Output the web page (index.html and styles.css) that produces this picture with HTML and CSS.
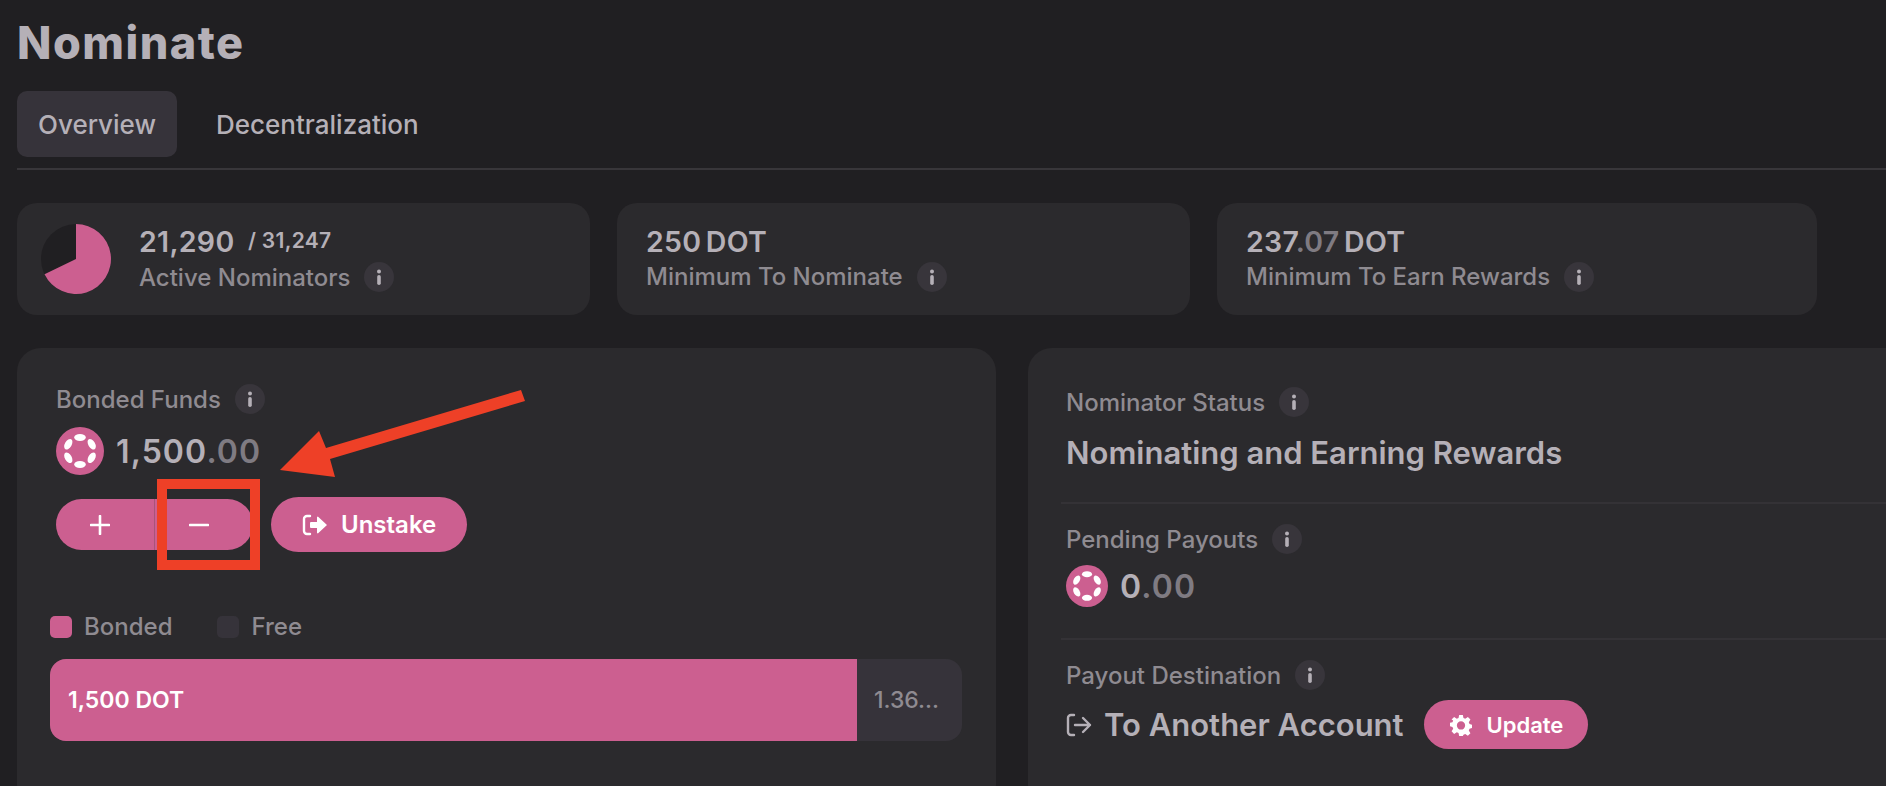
FILE: index.html
```html
<!DOCTYPE html>
<html lang="en">
<head>
<meta charset="UTF-8" />
<meta name="viewport" content="width=device-width, initial-scale=1" />
<title>Nominate</title>
<link rel="stylesheet" href="styles.css">
</head>
<body>
  <svg class="sprite" aria-hidden="true">
    <symbol id="info" viewBox="0 0 30 30">
      <circle cx="15" cy="15" r="15" fill="#38353b" />
      <ellipse cx="15" cy="9.5" rx="2" ry="2" fill="#b5b0b7" />
      <rect x="13.2" y="13" width="3.6" height="10" rx="1.8" fill="#b5b0b7" />
    </symbol>
    <symbol id="dot" viewBox="0 0 48 48">
      <circle cx="24" cy="24" r="24" fill="#cc5f90" />
      <ellipse cx="24" cy="10.5" rx="5.8" ry="3.4" fill="#fff" />
      <ellipse cx="24" cy="37.5" rx="5.8" ry="3.4" fill="#fff" />
      <ellipse cx="12.3" cy="17.2" rx="5.8" ry="3.4" fill="#fff" transform="rotate(-60 12.3 17.2)" />
      <ellipse cx="35.7" cy="17.2" rx="5.8" ry="3.4" fill="#fff" transform="rotate(60 35.7 17.2)" />
      <ellipse cx="12.3" cy="30.8" rx="5.8" ry="3.4" fill="#fff" transform="rotate(60 12.3 30.8)" />
      <ellipse cx="35.7" cy="30.8" rx="5.8" ry="3.4" fill="#fff" transform="rotate(-60 35.7 30.8)" />
    </symbol>
  </svg>

  <div class="page">
    <h1>Nominate</h1>

    <div class="tabs">
      <button class="tab active">Overview</button>
      <button class="tab">Decentralization</button>
    </div>

    <div class="stats">
      <div class="stat stat-pie">
        <svg class="pie" viewBox="0 0 70 70">
          <circle cx="35" cy="35" r="35" fill="#201f22" />
          <path d="M35 35 L35 0 A35 35 0 1 1 3.5 50.3 Z" fill="#cc5f90" />
        </svg>
        <div class="stat-text">
          <div class="stat-value">21,290 <span class="stat-total">/ 31,247</span></div>
          <div class="label">Active Nominators <svg class="info"><use href="#info" /></svg></div>
        </div>
      </div>
      <div class="stat stat-mid">
        <div class="stat-text">
          <div class="stat-value">250 DOT</div>
          <div class="label">Minimum To Nominate <svg class="info"><use href="#info" /></svg></div>
        </div>
      </div>
      <div class="stat stat-last">
        <div class="stat-text">
          <div class="stat-value">237<span class="faded">.07</span> DOT</div>
          <div class="label">Minimum To Earn Rewards <svg class="info"><use href="#info" /></svg></div>
        </div>
      </div>
    </div>

    <div class="panels">
      <section class="panel bonded">
        <div class="label">Bonded Funds <svg class="info"><use href="#info" /></svg></div>
        <div class="amount">
          <svg class="token"><use href="#dot" /></svg>
          <span>1,500<span class="faded">.00</span></span>
        </div>
        <div class="actions">
          <div class="btn-group">
            <button class="btn-half">
              <svg viewBox="0 0 20 20" width="20" height="20"><path d="M10 1v18M1 10h18" stroke="#fff" stroke-width="2.6" stroke-linecap="round" /></svg>
            </button>
            <button class="btn-half">
              <svg viewBox="0 0 20 20" width="20" height="20"><path d="M1 10h18" stroke="#fff" stroke-width="2.6" stroke-linecap="round" /></svg>
            </button>
          </div>
          <button class="btn btn-unstake">
            <svg viewBox="0 0 26 24" width="26" height="24"><path d="M8 3H5a3 3 0 0 0-3 3v12a3 3 0 0 0 3 3h3" fill="none" stroke="#fff" stroke-width="2.4" stroke-linecap="round" /><path d="M9 9h6V4.5a.8.8 0 0 1 1.4-.6L25 12l-8.600 8.100a.8.8 0 0 1-1.400-.6V15H9a1 1 0 0 1-1-1v-4a1 1 0 0 1 1-1z" fill="#fff" /></svg>
            Unstake
          </button>
        </div>
        <div class="legend">
          <span class="legend-item"><i class="swatch swatch-bonded"></i>Bonded</span>
          <span class="legend-item"><i class="swatch swatch-free"></i>Free</span>
        </div>
        <div class="bar">
          <div class="bar-fill">1,500 DOT</div>
          <div class="bar-rest">1.36...</div>
        </div>
      </section>

      <section class="panel status">
        <div class="row row-first">
          <div class="label">Nominator Status <svg class="info"><use href="#info" /></svg></div>
          <div class="status-text">Nominating and Earning Rewards</div>
        </div>
        <div class="row">
          <div class="label">Pending Payouts <svg class="info"><use href="#info" /></svg></div>
          <div class="amount amount-small">
            <svg class="token"><use href="#dot" /></svg>
            <span>0<span class="faded">.00</span></span>
          </div>
        </div>
        <div class="row">
          <div class="label">Payout Destination <svg class="info"><use href="#info" /></svg></div>
          <div class="destination">
            <svg viewBox="0 0 26 26" width="26" height="26"><path d="M8 3H5a3 3 0 0 0-3 3v14a3 3 0 0 0 3 3h3" fill="none" stroke="#b5b0b7" stroke-width="2.4" stroke-linecap="round" /><path d="M9 13h15M17 6l7 7-7 7" fill="none" stroke="#b5b0b7" stroke-width="2.4" stroke-linecap="round" stroke-linejoin="round" /></svg>
            <span class="status-text">To Another Account</span>
            <button class="btn btn-update">
              <svg viewBox="0 0 24 24" width="22" height="22"><path fill="#fff" fill-rule="evenodd" d="M10 1h4l.7 3.300 1.900.8L19.500 3.300 22.300 6.100 20.500 9l.8 1.900 2.700.7v3.800l-2.700.7-.8 1.900 1.800 2.900-2.800 2.800-2.900-1.800-1.900.8L14 24h-4l-.7-3.300-1.900-.8-2.900 1.800-2.800-2.800L3.500 16l-.8-1.900L0 13.400V9.600l2.700-.7.8-1.900L1.700 6.100 4.500 3.300 7.400 5.100l1.900-.8zM12 8a4.500 4.500 0 1 0 0 9 4.500 4.500 0 0 0 0-9z" /></svg>
              Update
            </button>
          </div>
        </div>
      </section>
    </div>
  </div>

  <!-- annotation drawn over the screenshot -->
  <div class="mark-box"></div>
  <svg class="mark-arrow" viewBox="0 0 270 100" width="270" height="100">
    <polygon points="0,80 39,41 46,58 241,0 245,11 50,69 55,87" fill="#ee4027" />
  </svg>
</body>
</html>
```

FILE: styles.css
```css
* {
  box-sizing: border-box;
}
html, body {
  height: 100%;
}
body {
  margin: 0;
  background: #201f22;
  color: #b5b0b7;
  font-family: Inter, 'Noto Sans', sans-serif;
  overflow: hidden;
  position: relative;
}
button {
  font-family: inherit;
  border: none;
  cursor: pointer;
}
.sprite {
  display: none;
}
.page {
  padding-left: 17px;
  width: 1950px;
}
h1 {
  margin: 0;
  height: 91px;
  padding-top: 17px;
  font-size: 45px;
  line-height: 52px;
  font-weight: 800;
  letter-spacing: 1.5px;
}
.tabs {
  display: flex;
  height: 79px;
  padding-bottom: 12px;
  gap: 18px;
  border-bottom: 2px solid #38363a;
}
.tab {
  height: 66px;
  padding: 0 21px;
  background: none;
  border-radius: 10px;
  color: #b5b0b7;
  font-size: 26px;
  font-weight: 500;
}
.tab.active {
  background: #36333a;
}
.stats {
  display: flex;
  gap: 27px;
  margin-top: 33px;
}
.stat {
  display: flex;
  align-items: center;
  height: 112px;
  padding-left: 29px;
  background: #2b2a2d;
  border-radius: 20px;
}
.stat-pie {
  width: 573px;
  padding-left: 24px;
  gap: 28px;
}
.stat-mid {
  width: 573px;
}
.stat-last {
  width: 600px;
}
.stat-text {
  padding-bottom: 3px;
}
.pie {
  width: 70px;
  height: 70px;
  flex: none;
}
.stat-value {
  margin-bottom: 2px;
  font-size: 28.5px;
  line-height: 36px;
  font-weight: 600;
  letter-spacing: 0.3px;
  word-spacing: -3px;
}
.stat-total {
  margin-left: 9px;
  font-size: 21px;
  vertical-align: 4px;
  word-spacing: 0;
}
.faded {
  color: #7f7b82;
}
.label {
  display: flex;
  align-items: center;
  gap: 14px;
  height: 30px;
  font-size: 24px;
  font-weight: 500;
  color: #8f8b91;
}
.info {
  width: 30px;
  height: 30px;
  flex: none;
}
.panels {
  display: grid;
  grid-template-columns: 979px 900px;
  gap: 32px;
  margin-top: 33px;
}
.panel {
  height: 460px;
  background: #2b2a2d;
  border-radius: 24px;
}
.bonded {
  padding: 36px 33px 0 39px;
}
.amount {
  display: flex;
  align-items: center;
  gap: 12px;
  margin-top: 13px;
  font-size: 32px;
  font-weight: 600;
  letter-spacing: 1.1px;
}
.token {
  width: 48px;
  height: 48px;
  flex: none;
}
.amount-small {
  margin-top: 11px;
  gap: 12px;
}
.amount-small .token {
  width: 42px;
  height: 42px;
}
.actions {
  display: flex;
  align-items: center;
  gap: 18px;
  margin-top: 22px;
}
.btn-group {
  display: flex;
  width: 197px;
  height: 51px;
  border-radius: 26px;
  overflow: hidden;
}
.btn-half {
  flex: 1;
  display: flex;
  align-items: center;
  justify-content: center;
  padding: 0 10px 0 0;
  background: #cc5f90;
}
.btn-half + .btn-half {
  border-left: 1px solid #a8537b;
}
.btn {
  display: flex;
  align-items: center;
  background: #cc5f90;
  color: #fff;
  font-weight: 600;
  border-radius: 28px;
}
.btn-unstake {
  gap: 13px;
  width: 196px;
  height: 55px;
  padding: 0 0 0 31px;
  font-size: 24px;
}
.legend {
  display: flex;
  gap: 45px;
  margin: 61px 0 0 -6px;
}
.legend-item {
  display: flex;
  align-items: center;
  gap: 12px;
  font-size: 24px;
  line-height: 27px;
  font-weight: 500;
  color: #8f8b91;
}
.swatch {
  width: 22px;
  height: 22px;
  border-radius: 5px;
}
.swatch-bonded {
  background: #cc5f90;
}
.swatch-free {
  background: #36333a;
}
.bar {
  display: flex;
  height: 82px;
  margin: 19px 0 0 -6px;
  width: 912px;
  border-radius: 16px;
  overflow: hidden;
  background: #36333a;
  font-size: 23px;
  font-weight: 500;
}
.bar-fill {
  display: flex;
  align-items: center;
  width: 807px;
  padding-left: 18px;
  background: #cc5f90;
  color: #fff;
  font-weight: 600;
}
.bar-rest {
  display: flex;
  align-items: center;
  padding-left: 17px;
  color: #8f8b91;
}
.status {
  padding: 0 0 0 33px;
}
.row {
  height: 136px;
  padding: 20px 0 0 5px;
  border-top: 2px solid #343236;
}
.row-first {
  height: 154px;
  padding-top: 39px;
  border-top: none;
}
.status-text {
  margin-top: 16px;
  font-size: 31px;
  line-height: 40px;
  font-weight: 600;
}
.destination {
  display: flex;
  align-items: center;
  margin-top: 10px;
}
.destination .status-text {
  margin: 0 20px 0 12px;
}
.btn-update {
  gap: 15px;
  width: 164px;
  height: 49px;
  padding: 0 0 0 26px;
  font-size: 22px;
}
.mark-box {
  position: absolute;
  left: 157px;
  top: 479px;
  width: 103px;
  height: 91px;
  border: 10px solid #ee4027;
}
.mark-arrow {
  position: absolute;
  left: 280px;
  top: 390px;
}
```
